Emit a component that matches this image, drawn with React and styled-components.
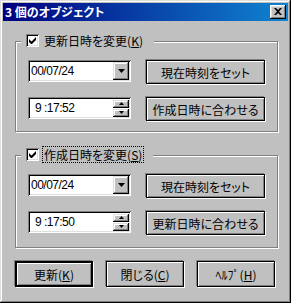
import React from "react";
import styled, { createGlobalStyle } from "styled-components";

const Global = createGlobalStyle`
  html, body { margin: 0; padding: 0; background: #c0c0c0; }
  body { font-family: "Noto Sans CJK JP", "Liberation Sans", sans-serif; font-size: 12px; }
  * { box-sizing: border-box; }
`;

const Window = styled.div`
  width: 291px;
  height: 303px;
  background: #c0c0c0;
  padding: 3px;
  box-shadow: inset -1px -1px #000, inset 1px 1px #dfdfdf, inset -2px -2px #808080, inset 2px 2px #fff;
  display: flex;
  flex-direction: column;
`;

const TitleBar = styled.div`
  height: 18px;
  background: linear-gradient(90deg, #000080, #1084d0);
  display: flex;
  align-items: center;
  justify-content: space-between;
  padding: 0 2px 0 2px;
`;

const Title = styled.span`
  color: #fff;
  font-weight: bold;
  font-size: 12px;
  line-height: 18px;
  font-family: "Noto Sans CJK JP", "Liberation Sans", sans-serif;
  font-feature-settings: "palt";
`;

const CloseButton = styled.div`
  width: 16px;
  height: 14px;
  background: #c0c0c0;
  box-shadow: inset -1px -1px #000, inset 1px 1px #fff, inset -2px -2px #808080, inset 2px 2px #dfdfdf;
  display: flex;
  align-items: center;
  justify-content: center;
  padding-bottom: 1px;
`;

const Body = styled.div`
  display: flex;
  flex-direction: column;
  padding: 20px 10px 0 12px;
`;

const Group = styled.div`
  position: relative;
  height: ${(p) => p.$h}px;
  margin-bottom: ${(p) => p.$mb}px;
  border: 1px solid #808080;
  box-shadow: inset 1px 1px #fff, 1px 1px 0 #fff;
  padding: 18px 0 0 12px;
  display: flex;
  flex-direction: column;
  gap: 13px;
`;

const Legend = styled.div`
  position: absolute;
  left: 5px;
  top: -8px;
  height: 13px;
  display: flex;
  align-items: center;
  gap: 4px;
  background: #c0c0c0;
  padding: 0 10px 0 5px;
`;

const CheckBox = styled.div`
  width: 13px;
  height: 13px;
  background: #fff;
  box-shadow: inset 1px 1px #808080, inset -1px -1px #fff, inset 2px 2px #000, inset -2px -2px #dfdfdf;
  display: flex;
  align-items: center;
  justify-content: center;
`;

const LegendLabel = styled.span`
  font-size: 12px;
  line-height: 15px;
  padding: 0 1px;
  font-feature-settings: "palt";
  outline: ${(p) => (p.$focused ? "1px dotted #000" : "none")};
  outline-offset: 0;
  color: #000;
  white-space: nowrap;
`;

const Row = styled.div`
  display: flex;
  align-items: flex-start;
  gap: 15px;
`;

const Field = styled.div`
  width: 103px;
  height: 22px;
  background: #fff;
  box-shadow: inset 1px 1px #808080, inset -1px -1px #fff, inset 2px 2px #000, inset -2px -2px #dfdfdf;
  padding: 2px 2px 2px ${(p) => p.$pl}px;
  display: flex;
  align-items: center;
  justify-content: space-between;
`;

const FieldText = styled.span`
  font-family: "Liberation Sans", Arial, sans-serif;
  font-size: 12px;
  color: #000;
  letter-spacing: -0.5px;
`;

const DropButton = styled.div`
  width: 16px;
  height: 18px;
  background: #c0c0c0;
  box-shadow: inset -1px -1px #000, inset 1px 1px #dfdfdf, inset -2px -2px #808080, inset 2px 2px #fff;
  display: flex;
  align-items: center;
  justify-content: center;
`;

const Spin = styled.div`
  display: flex;
  flex-direction: column;
  justify-content: center;
  gap: 1px;
  width: 16px;
  height: 18px;
`;

const SpinButton = styled.div`
  height: 8px;
  background: #c0c0c0;
  box-shadow: inset -1px -1px #000, inset 1px 1px #dfdfdf, inset -2px -2px #808080, inset 2px 2px #fff;
  display: flex;
  align-items: center;
  justify-content: center;
`;

const Button = styled.div`
  width: ${(p) => p.$w}px;
  height: ${(p) => p.$h}px;
  background: #c0c0c0;
  border: ${(p) => (p.$default ? 2 : 1)}px solid #000;
  box-shadow: 1px 1px 0 #fff, -1px -1px 0 #808080, inset 1px 1px #fff, inset -1px -1px #808080;
  display: flex;
  align-items: center;
  justify-content: center;
  font-size: 12px;
  color: #000;
  font-feature-settings: "palt";
  white-space: nowrap;
`;

const Footer = styled.div`
  display: flex;
  gap: 13px;
`;

const Check = () => (
  <svg width="7" height="7" viewBox="0 0 7 7">
    <path d="M0 2v3l2 2h1l4-4V0L2.5 4.5z" fill="#000" />
  </svg>
);

const Down = () => (
  <svg width="7" height="4" viewBox="0 0 7 4">
    <path d="M0 0h7L3.5 4z" fill="#000" />
  </svg>
);

const TinyUp = () => (
  <svg width="5" height="3" viewBox="0 0 5 3">
    <path d="M2.5 0L5 3H0z" fill="#000" />
  </svg>
);

const TinyDown = () => (
  <svg width="5" height="3" viewBox="0 0 5 3">
    <path d="M0 0h5L2.5 3z" fill="#000" />
  </svg>
);

const CloseX = () => (
  <svg width="8" height="7" viewBox="0 0 8 7">
    <path d="M0 0h2l2 2 2-2h2L5 3.5 8 7H6L4 5 2 7H0l3-3.5z" fill="#000" />
  </svg>
);

const DateBox = ({ value }) => (
  <Field $pl={3}>
    <FieldText>{value}</FieldText>
    <DropButton><Down /></DropButton>
  </Field>
);

const TimeBox = ({ value }) => (
  <Field $pl={7}>
    <FieldText>{value}</FieldText>
    <Spin>
      <SpinButton><TinyUp /></SpinButton>
      <SpinButton><TinyDown /></SpinButton>
    </Spin>
  </Field>
);

const DateGroup = ({ label, mn, focused, date, time, second, h, mb }) => (
  <Group $h={h} $mb={mb}>
    <Legend>
      <CheckBox><Check /></CheckBox>
      <LegendLabel $focused={focused}>
        {label}(<u>{mn}</u>)
      </LegendLabel>
    </Legend>
    <Row>
      <DateBox value={date} />
      <Button $w={119} $h={24}>現在時刻をセット</Button>
    </Row>
    <Row>
      <TimeBox value={time} />
      <Button $w={119} $h={24}>{second}</Button>
    </Row>
  </Group>
);

export default function App() {
  return (
    <>
      <Global />
      <Window>
        <TitleBar>
          <Title>3 個のオブジェクト</Title>
          <CloseButton><CloseX /></CloseButton>
        </TitleBar>
        <Body>
          <DateGroup label="更新日時を変更" mn="K" date="00/07/24" time="9 :17:52" second="作成日時に合わせる" h={91} mb={23} />
          <DateGroup label="作成日時を変更" mn="S" focused date="00/07/24" time="9 :17:50" second="更新日時に合わせる" h={93} mb={13} />
          <Footer>
            <Button $w={78} $h={26} $default>更新(<u>K</u>)</Button>
            <Button $w={78} $h={26}>閉じる(<u>C</u>)</Button>
            <Button $w={78} $h={26}>ﾍﾙﾌﾟ(<u>H</u>)</Button>
          </Footer>
        </Body>
      </Window>
    </>
  );
}
